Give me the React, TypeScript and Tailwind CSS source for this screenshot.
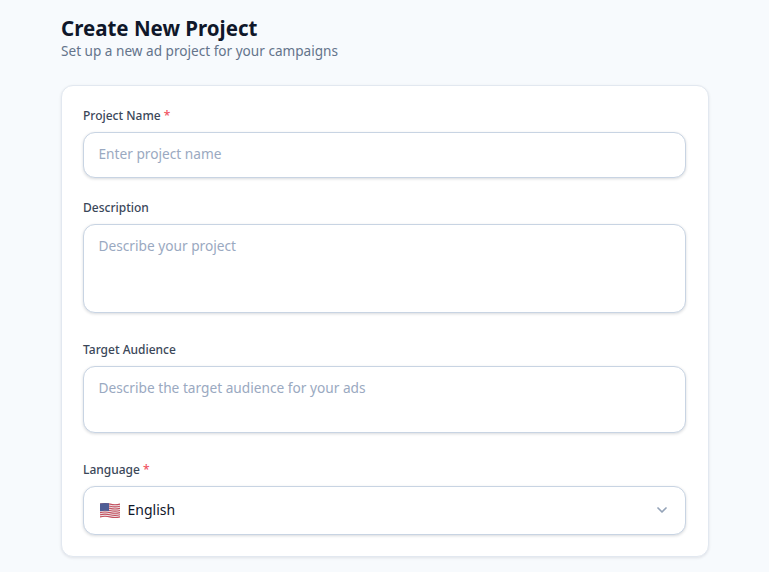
import { ChevronDown } from 'lucide-react'

const flagStripes = [0, 1, 2, 3, 4, 5, 6]

function UsFlag() {
  return (
    <svg width="22" height="18" viewBox="0 0 22 18" className="shrink-0">
      <path d="M1 2.6 Q6 1.4 11 2.6 T21 2.6 V16.4 Q16 17.6 11 16.4 T1 16.4 Z" fill="#ece6e8" />
      {flagStripes.map((i) => {
        const y = 2.6 + i * 2.12
        return (
          <path
            key={i}
            d={`M1 ${y} Q6 ${y - 1.2} 11 ${y} T21 ${y} V${y + 1.1} Q16 ${y + 2.3} 11 ${y + 1.1} T1 ${y + 1.1} Z`}
            fill="#c4505f"
          />
        )
      })}
      <path d="M1 2.6 Q5 1.6 10 2.3 V10 Q5 9.2 1 10.2 Z" fill="#4f5d95" />
    </svg>
  )
}

function Label({ text, required }: { text: string; required?: boolean }) {
  return (
    <label className="block text-[12px] leading-[16px] font-medium text-[#3b4759] mb-[8px]">
      {text}
      {required && <span className="text-[#f0525f]"> *</span>}
    </label>
  )
}

const boxClass =
  'w-full rounded-[12px] border border-[#c8d4e3] bg-white shadow-[0_1px_3px_rgba(15,23,42,0.16)] pl-[14.5px] pr-[15px] text-[13.7px] text-[#0f172a] placeholder:text-[#9aa9c1] outline-none'

export default function App() {
  return (
    <div className="h-[572px] overflow-hidden bg-[#f7fafd] font-['Noto_Sans',sans-serif]">
      <div className="w-[648px] ml-[61px] pt-[14px]">
        <h1 className="text-[20.5px] leading-[28px] font-bold text-[#0f172a] -mt-[0.5px]">Create New Project</h1>
        <p className="text-[13.6px] leading-[18px] text-[#64748b] mt-[0.5px]">
          Set up a new ad project for your campaigns
        </p>

        <div className="mt-[25px] h-[472px] rounded-[12px] border border-[#e2e8f0] bg-white pt-[22px] pl-[21px] pr-[22px] shadow-[0_1px_3px_rgba(15,23,42,0.1)]">
          <Label text="Project Name" required />
          <input className={`${boxClass} h-[46px] block pb-[3px]`} placeholder="Enter project name" />

          <div className="mt-[22px]">
            <Label text="Description" />
            <textarea className={`${boxClass} h-[89px] block resize-none py-[11px] leading-[20px]`} placeholder="Describe your project" />
          </div>

          <div className="mt-[29px]">
            <Label text="Target Audience" />
            <textarea className={`${boxClass} h-[67px] block resize-none py-[11px] leading-[20px]`} placeholder="Describe the target audience for your ads" />
          </div>

          <div className="mt-[29px]">
            <Label text="Language" required />
            <div className={`${boxClass} h-[49px] flex items-center justify-between pb-[2px]`}>
              <div className="flex items-center gap-[7px] text-[14px]">
                <UsFlag />
                <span>English</span>
              </div>
              <ChevronDown size={16} strokeWidth={2.5} className="text-[#94a3b8]" />
            </div>
          </div>
        </div>
      </div>
    </div>
  )
}
